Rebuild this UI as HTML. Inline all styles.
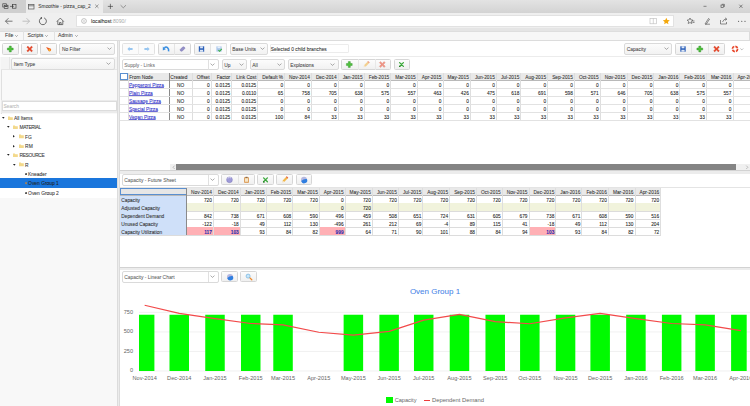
<!DOCTYPE html><html><head><meta charset="utf-8"><style>
html,body{margin:0;padding:0;width:750px;height:406px;overflow:hidden;background:#fff;font-family:"Liberation Sans", sans-serif;}
*{box-sizing:border-box} div{-webkit-text-stroke-width:0.07px}
</style></head><body><div style="position:relative;width:750px;height:406px;overflow:hidden">
<div style="position:absolute;left:0px;top:0px;width:750px;height:13px;background:linear-gradient(#e3e3e3,#d3d3d3)"></div>
<div style="position:absolute;left:0px;top:0px;width:26px;height:12.5px;background:#cfcfcf"></div>
<div style="position:absolute;left:26px;top:0px;width:77px;height:13px;background:#ececec"></div>
<svg style="position:absolute;left:0px;top:0px;pointer-events:none" width="750" height="406" viewBox="0 0 750 406"><rect x="2.8" y="3.8" width="3.6" height="3.2" fill="none" stroke="#333" stroke-width="0.6"/><rect x="4.2" y="5.2" width="3.8" height="3.4" fill="#d0d0d0" stroke="#333" stroke-width="0.6"/><rect x="4.6" y="5.8" width="3" height="1" fill="#333"/><rect x="12.4" y="4.6" width="3.6" height="3.6" fill="none" stroke="#333" stroke-width="0.6"/><path d="M10,6.4 h3.4 M12,5.2 l1.3,1.2 l-1.3,1.2" fill="none" stroke="#333" stroke-width="0.6"/><rect x="28.5" y="4.5" width="5.5" height="4.5" fill="none" stroke="#555" stroke-width="0.7"/><line x1="28.5" y1="5.8" x2="34" y2="5.8" stroke="#555" stroke-width="0.7"/><path d="M95.2,4.6 l3.3,3.3 M98.5,4.6 l-3.3,3.3" stroke="#555" stroke-width="0.55"/><path d="M107.8,6.4 h5.2 M110.4,3.8 v5.2" stroke="#333" stroke-width="0.6"/><path d="M120.6,5.2 l2.7,2.6 l2.7,-2.6" fill="none" stroke="#555" stroke-width="0.55"/><path d="M703.5,6.3 h3" stroke="#444" stroke-width="0.6"/><rect x="721" y="5" width="2.6" height="2.6" fill="none" stroke="#444" stroke-width="0.6"/><path d="M721.8,4.3 h2.6 v2.6" fill="none" stroke="#444" stroke-width="0.6"/><path d="M739.3,4.7 l3.2,3.2 M742.5,4.7 l-3.2,3.2" stroke="#333" stroke-width="0.55"/></svg>
<div style="position:absolute;left:38.3px;top:4.6px;font-size:4.9px;line-height:1;white-space:nowrap;color:#3c3c3c;-webkit-text-stroke-width:0.05px">Smoothie - pizza_cap_2</div>
<div style="position:absolute;left:0px;top:13px;width:750px;height:17px;background:#efefef"></div>
<div style="position:absolute;left:76px;top:14.5px;width:598px;height:12.5px;background:#fff;border:0.5px solid #e2e2e2"></div>
<svg style="position:absolute;left:0px;top:0px;pointer-events:none" width="750" height="406" viewBox="0 0 750 406"><path d="M5.5,21.2 h7 M5.5,21.2 l3,-3 M5.5,21.2 l3,3" fill="none" stroke="#444" stroke-width="0.7"/><path d="M22.5,21.2 h7 M29.5,21.2 l-3,-3 M29.5,21.2 l-3,3" fill="none" stroke="#aaa" stroke-width="0.7"/><path d="M44.1,17.9 A3.5,3.5 0 1 1 41.4,18.0" fill="none" stroke="#333" stroke-width="0.7"/><circle cx="41.3" cy="18.1" r="0.75" fill="#222"/><path d="M56.8,21.6 l3.5,-3.5 l3.5,3.5 M57.8,20.8 v3.8 h5 v-3.8 M59.5,24.6 v-2 h1.6 v2" fill="none" stroke="#333" stroke-width="0.65"/><circle cx="84" cy="21" r="2.4" fill="none" stroke="#888" stroke-width="0.5"/><path d="M84,20 v2.3" stroke="#888" stroke-width="0.5"/><rect x="650" y="18.3" width="6.5" height="5.5" fill="none" stroke="#bbb" stroke-width="0.6"/><line x1="653.3" y1="18.3" x2="653.3" y2="23.8" stroke="#bbb" stroke-width="0.6"/><path d="M666.3,17.8 l1.05,2.2 l2.4,0.3 l-1.8,1.6 l0.5,2.4 l-2.15,-1.2 l-2.15,1.2 l0.5,-2.4 l-1.8,-1.6 l2.4,-0.3 z" fill="#f4a80c"/><path d="M690,18 l0.9,1.9 l2,0.2 l-1.5,1.4 l0.4,2 l-1.8,-1 l-1.8,1 l0.4,-2 l-1.5,-1.4 l2,-0.2 z" fill="none" stroke="#444" stroke-width="0.6"/><path d="M692,21 h2.5 M692.5,22.5 h2" stroke="#444" stroke-width="0.6"/><path d="M705,24 l3.5,-5.5 l1,0.7 l-3.5,5.3 z M706,24.2 h4" fill="none" stroke="#444" stroke-width="0.6"/><path d="M720.5,20 v4 h6 v-2 M722.5,22 q1,-3 4,-3 M725,17.8 l1.8,1.4 l-1.6,1.3" fill="none" stroke="#444" stroke-width="0.6"/><circle cx="738.6" cy="21.2" r="0.55" fill="#333"/><circle cx="741.8" cy="21.2" r="0.55" fill="#333"/><circle cx="745" cy="21.2" r="0.55" fill="#333"/></svg>
<div style="position:absolute;left:91px;top:19.3px;font-size:5.2px;line-height:1;white-space:nowrap;color:#2a2a2a;-webkit-text-stroke-width:0.05px">localhost<span style="color:#aaa;-webkit-text-stroke-width:0">:8090/</span></div>
<div style="position:absolute;left:0px;top:28.2px;width:750px;height:2.6px;background:#e5e5e5"></div>
<div style="position:absolute;left:0px;top:30.6px;width:750px;height:10.4px;background:#f7f7f7;border-top:0.4px solid #dedede;border-bottom:0.6px solid #dcdcdc;border-right:0.6px solid #dcdcdc"></div>
<div style="position:absolute;left:22.5px;top:31px;width:0.6px;height:9px;background:#e2e2e2"></div>
<div style="position:absolute;left:53.5px;top:31px;width:0.6px;height:9px;background:#e2e2e2"></div>
<div style="position:absolute;left:5.0px;top:32.8px;font-size:5.2px;line-height:1;white-space:nowrap;color:#3a3a3a;-webkit-text-stroke-width:0.05px">File</div>
<div style="position:absolute;left:27.5px;top:32.8px;font-size:5.2px;line-height:1;white-space:nowrap;color:#3a3a3a;-webkit-text-stroke-width:0.05px">Scripts</div>
<div style="position:absolute;left:58px;top:32.8px;font-size:5.2px;line-height:1;white-space:nowrap;color:#3a3a3a;-webkit-text-stroke-width:0.05px">Admin</div>
<svg style="position:absolute;left:15.0px;top:35px;" width="3" height="2" viewBox="0 0 3 2"><path d="M0.3,0.3 L1.5,1.5 L2.7,0.3" fill="none" stroke="#555" stroke-width="0.55"/></svg>
<svg style="position:absolute;left:45.0px;top:35px;" width="3" height="2" viewBox="0 0 3 2"><path d="M0.3,0.3 L1.5,1.5 L2.7,0.3" fill="none" stroke="#555" stroke-width="0.55"/></svg>
<svg style="position:absolute;left:74.5px;top:35px;" width="3" height="2" viewBox="0 0 3 2"><path d="M0.3,0.3 L1.5,1.5 L2.7,0.3" fill="none" stroke="#555" stroke-width="0.55"/></svg>
<div style="position:absolute;left:0px;top:41px;width:117px;height:365px;background:#f8f8f8"></div>
<div style="position:absolute;left:0px;top:41px;width:117px;height:15.5px;background:#fff"></div>
<div style="position:absolute;left:2px;top:43px;width:17px;height:12px;box-sizing:border-box;border:0.6px solid #d6d6d6;border-radius:1.5px;background:linear-gradient(#fcfcfc,#f0f0f0);"></div>
<div style="position:absolute;left:21.3px;top:43px;width:17px;height:12px;box-sizing:border-box;border:0.6px solid #d6d6d6;border-radius:1.5px;background:linear-gradient(#fcfcfc,#f0f0f0);"></div>
<div style="position:absolute;left:40.3px;top:43px;width:17px;height:12px;box-sizing:border-box;border:0.6px solid #d6d6d6;border-radius:1.5px;background:linear-gradient(#fcfcfc,#f0f0f0);"></div>
<div style="position:absolute;left:59.2px;top:43.2px;width:56px;height:11.4px;box-sizing:border-box;border:0.6px solid #dadada;border-radius:2px;background:linear-gradient(#fcfcfc,#f2f2f2);"></div>
<div style="position:absolute;left:62.0px;top:48.150000000000006px;font-size:4.9px;line-height:1;white-space:nowrap;color:#3a3a3a;-webkit-text-stroke-width:0.04px">No Filter</div>
<svg style="position:absolute;left:106.7px;top:47.400000000000006px;" width="5" height="3" viewBox="0 0 5 3"><path d="M0.5,0.6 L2.5,2.4 L4.5,0.6" fill="none" stroke="#777" stroke-width="0.6"/></svg>
<div style="position:absolute;left:1px;top:56.5px;width:116px;height:57px;background:#f9f9f9;border-left:0.6px solid #e0e0e0"></div>
<div style="position:absolute;left:1px;top:57px;width:116px;height:13px;background:#f4f4f4;border-bottom:0.6px solid #e6e6e6"></div>
<div style="position:absolute;left:9.3px;top:57px;width:0.6px;height:13px;background:#e6e6e6"></div>
<div style="position:absolute;left:11px;top:58px;width:103.8px;height:11.5px;box-sizing:border-box;border:0.6px solid #dadada;border-radius:2px;background:linear-gradient(#fcfcfc,#f2f2f2);"></div>
<div style="position:absolute;left:13.8px;top:63.0px;font-size:4.9px;line-height:1;white-space:nowrap;color:#3a3a3a;-webkit-text-stroke-width:0.04px">Item Type</div>
<svg style="position:absolute;left:106.3px;top:62.25px;" width="5" height="3" viewBox="0 0 5 3"><path d="M0.5,0.6 L2.5,2.4 L4.5,0.6" fill="none" stroke="#777" stroke-width="0.6"/></svg>
<div style="position:absolute;left:1px;top:99.5px;width:116px;height:13px;background:#ebebeb"></div>
<div style="position:absolute;left:1.5px;top:100.5px;width:115px;height:10.5px;background:#fff;border:0.6px solid #dcdcdc"></div>
<div style="position:absolute;left:3.5px;top:105.2px;font-size:4.9px;line-height:1;white-space:nowrap;color:#bbb;">Search</div>
<div style="position:absolute;left:0px;top:113.5px;width:117px;height:84px;background:#fff"></div>
<svg style="position:absolute;left:1.8px;top:116.9px;" width="3" height="2.5" viewBox="0 0 3 2.5"><path d="M0,0 h2.6 l-1.3,1.8 z" fill="#222"/></svg>
<svg style="position:absolute;left:7.6px;top:115.7px;" width="5" height="4.2" viewBox="0 0 5 4.2"><path d="M0,0.6 h1.8 l0.6,0.6 h2.4 v3 h-4.8 z" fill="#f3d98b"/></svg>
<div style="position:absolute;left:13.9px;top:116.80000000000001px;font-size:4.9px;line-height:1;white-space:nowrap;color:#333;">All Items</div>
<svg style="position:absolute;left:7.3999999999999995px;top:126.25px;" width="3" height="2.5" viewBox="0 0 3 2.5"><path d="M0,0 h2.6 l-1.3,1.8 z" fill="#222"/></svg>
<svg style="position:absolute;left:13.2px;top:125.05px;" width="5" height="4.2" viewBox="0 0 5 4.2"><path d="M0,0.6 h1.8 l0.6,0.6 h2.4 v3 h-4.8 z" fill="#f3d98b"/></svg>
<div style="position:absolute;left:19.5px;top:126.15px;font-size:4.9px;line-height:1;white-space:nowrap;color:#333;letter-spacing:-0.35px">MATERIAL</div>
<svg style="position:absolute;left:13.399999999999999px;top:135.29999999999998px;" width="2.5" height="3" viewBox="0 0 2.5 3"><path d="M0,0 v2.6 l1.8,-1.3 z" fill="#222"/></svg>
<svg style="position:absolute;left:18.799999999999997px;top:134.4px;" width="5" height="4.2" viewBox="0 0 5 4.2"><path d="M0,0.6 h1.8 l0.6,0.6 h2.4 v3 h-4.8 z" fill="#f3d98b"/></svg>
<div style="position:absolute;left:25.1px;top:135.5px;font-size:4.9px;line-height:1;white-space:nowrap;color:#333;">FG</div>
<svg style="position:absolute;left:13.399999999999999px;top:144.64999999999998px;" width="2.5" height="3" viewBox="0 0 2.5 3"><path d="M0,0 v2.6 l1.8,-1.3 z" fill="#222"/></svg>
<svg style="position:absolute;left:18.799999999999997px;top:143.75px;" width="5" height="4.2" viewBox="0 0 5 4.2"><path d="M0,0.6 h1.8 l0.6,0.6 h2.4 v3 h-4.8 z" fill="#f3d98b"/></svg>
<div style="position:absolute;left:25.1px;top:144.85px;font-size:4.9px;line-height:1;white-space:nowrap;color:#333;">RM</div>
<svg style="position:absolute;left:7.3999999999999995px;top:154.3px;" width="3" height="2.5" viewBox="0 0 3 2.5"><path d="M0,0 h2.6 l-1.3,1.8 z" fill="#222"/></svg>
<svg style="position:absolute;left:13.2px;top:153.10000000000002px;" width="5" height="4.2" viewBox="0 0 5 4.2"><path d="M0,0.6 h1.8 l0.6,0.6 h2.4 v3 h-4.8 z" fill="#f3d98b"/></svg>
<div style="position:absolute;left:19.5px;top:154.20000000000002px;font-size:4.9px;line-height:1;white-space:nowrap;color:#333;letter-spacing:-0.35px">RESOURCE</div>
<svg style="position:absolute;left:13.0px;top:163.65px;" width="3" height="2.5" viewBox="0 0 3 2.5"><path d="M0,0 h2.6 l-1.3,1.8 z" fill="#222"/></svg>
<svg style="position:absolute;left:18.799999999999997px;top:162.45000000000002px;" width="5" height="4.2" viewBox="0 0 5 4.2"><path d="M0,0.6 h1.8 l0.6,0.6 h2.4 v3 h-4.8 z" fill="#f3d98b"/></svg>
<div style="position:absolute;left:25.1px;top:163.55px;font-size:4.9px;line-height:1;white-space:nowrap;color:#333;">R</div>
<svg style="position:absolute;left:25.199999999999996px;top:172.9px;" width="2.3" height="2.3" viewBox="0 0 2.3 2.3"><circle cx="1.15" cy="1.15" r="1.15" fill="#555"/></svg>
<div style="position:absolute;left:28.099999999999998px;top:172.9px;font-size:4.9px;line-height:1;white-space:nowrap;color:#333;">Kneader</div>
<div style="position:absolute;left:0px;top:178.35000000000002px;width:117px;height:10px;background:#1a76dc"></div>
<svg style="position:absolute;left:25.199999999999996px;top:182.25000000000003px;" width="2.3" height="2.3" viewBox="0 0 2.3 2.3"><circle cx="1.15" cy="1.15" r="1.15" fill="#a08060"/></svg>
<div style="position:absolute;left:28.099999999999998px;top:182.25000000000003px;font-size:4.9px;line-height:1;white-space:nowrap;color:#222;">Oven Group 1</div>
<svg style="position:absolute;left:25.199999999999996px;top:191.6px;" width="2.3" height="2.3" viewBox="0 0 2.3 2.3"><circle cx="1.15" cy="1.15" r="1.15" fill="#555"/></svg>
<div style="position:absolute;left:28.099999999999998px;top:191.6px;font-size:4.9px;line-height:1;white-space:nowrap;color:#333;">Oven Group 2</div>
<div style="position:absolute;left:117px;top:41px;width:3px;height:365px;background:#ececec"></div>
<div style="position:absolute;left:117px;top:41px;width:0.6px;height:365px;background:#dcdcdc"></div>
<div style="position:absolute;left:119.4px;top:41px;width:0.6px;height:365px;background:#dcdcdc"></div>
<div style="position:absolute;left:120px;top:41px;width:630px;height:130px;background:#fff"></div>
<div style="position:absolute;left:120px;top:56.3px;width:630px;height:0.6px;background:#ececec"></div>
<div style="position:absolute;left:121.5px;top:43px;width:33.5px;height:11.8px;box-sizing:border-box;border:0.6px solid #d6d6d6;border-radius:1.5px;background:linear-gradient(#fcfcfc,#f0f0f0);background:#fbfbfb;border-color:#e2e2e2"></div>
<div style="position:absolute;left:138.3px;top:43.5px;width:0.6px;height:11px;background:#ececec"></div>
<div style="position:absolute;left:157.5px;top:43px;width:33.5px;height:11.8px;box-sizing:border-box;border:0.6px solid #d6d6d6;border-radius:1.5px;background:linear-gradient(#fcfcfc,#f0f0f0);"></div>
<div style="position:absolute;left:174.3px;top:43.5px;width:0.6px;height:11px;background:#e4e4e4"></div>
<div style="position:absolute;left:193.5px;top:43px;width:33.5px;height:11.8px;box-sizing:border-box;border:0.6px solid #d6d6d6;border-radius:1.5px;background:linear-gradient(#fcfcfc,#f0f0f0);"></div>
<div style="position:absolute;left:210.3px;top:43px;width:16.8px;height:11.8px;background:#fbfbfb;border-radius:0 1.5px 1.5px 0;border:0.6px solid #e2e2e2;border-left:0.6px solid #e4e4e4"></div>
<div style="position:absolute;left:229.5px;top:43.2px;width:38.5px;height:11.4px;box-sizing:border-box;border:0.6px solid #dadada;border-radius:2px;background:linear-gradient(#fcfcfc,#f2f2f2);"></div>
<div style="position:absolute;left:232.3px;top:48.150000000000006px;font-size:4.9px;line-height:1;white-space:nowrap;color:#3a3a3a;-webkit-text-stroke-width:0.04px">Base Units</div>
<svg style="position:absolute;left:259.5px;top:47.400000000000006px;" width="5" height="3" viewBox="0 0 5 3"><path d="M0.5,0.6 L2.5,2.4 L4.5,0.6" fill="none" stroke="#777" stroke-width="0.6"/></svg>
<div style="position:absolute;left:269.5px;top:44.3px;width:79px;height:8.8px;border:0.5px solid #ececec;border-radius:1px"></div>
<div style="position:absolute;left:270.8px;top:48.3px;font-size:4.9px;line-height:1;white-space:nowrap;color:#333;">Selected 0 child branches</div>
<div style="position:absolute;left:624px;top:43.2px;width:48px;height:11.4px;box-sizing:border-box;border:0.6px solid #dadada;border-radius:2px;background:linear-gradient(#fcfcfc,#f2f2f2);"></div>
<div style="position:absolute;left:626.8px;top:48.150000000000006px;font-size:4.9px;line-height:1;white-space:nowrap;color:#3a3a3a;-webkit-text-stroke-width:0.04px">Capacity</div>
<svg style="position:absolute;left:663.5px;top:47.400000000000006px;" width="5" height="3" viewBox="0 0 5 3"><path d="M0.5,0.6 L2.5,2.4 L4.5,0.6" fill="none" stroke="#777" stroke-width="0.6"/></svg>
<div style="position:absolute;left:674.5px;top:43px;width:50px;height:11.8px;box-sizing:border-box;border:0.6px solid #d6d6d6;border-radius:1.5px;background:linear-gradient(#fcfcfc,#f0f0f0);"></div>
<div style="position:absolute;left:691.3px;top:43.5px;width:0.6px;height:11px;background:#e4e4e4"></div>
<div style="position:absolute;left:708.3px;top:43.5px;width:0.6px;height:11px;background:#e4e4e4"></div>
<svg style="position:absolute;left:739.5px;top:48px;" width="4" height="3" viewBox="0 0 4 3"><path d="M0.4,0.5 L1.8,1.9 L3.2,0.5" fill="none" stroke="#777" stroke-width="0.5"/></svg>
<div style="position:absolute;left:121.5px;top:59px;width:97px;height:11px;box-sizing:border-box;border:0.6px solid #dadada;border-radius:2px;background:#fff;"></div>
<div style="position:absolute;left:124.3px;top:63.75px;font-size:4.9px;line-height:1;white-space:nowrap;color:#707070;-webkit-text-stroke-width:0.04px">Supply - Links</div>
<div style="position:absolute;left:207.5px;top:59.5px;width:0.6px;height:10px;background:#e0e0e0"></div>
<svg style="position:absolute;left:210.0px;top:63.0px;" width="5" height="3" viewBox="0 0 5 3"><path d="M0.5,0.6 L2.5,2.4 L4.5,0.6" fill="none" stroke="#777" stroke-width="0.6"/></svg>
<div style="position:absolute;left:221.5px;top:59px;width:25.5px;height:11px;box-sizing:border-box;border:0.6px solid #dadada;border-radius:2px;background:linear-gradient(#fcfcfc,#f2f2f2);"></div>
<div style="position:absolute;left:224.3px;top:63.75px;font-size:4.9px;line-height:1;white-space:nowrap;color:#3a3a3a;-webkit-text-stroke-width:0.04px">Up</div>
<svg style="position:absolute;left:238.5px;top:63.0px;" width="5" height="3" viewBox="0 0 5 3"><path d="M0.5,0.6 L2.5,2.4 L4.5,0.6" fill="none" stroke="#777" stroke-width="0.6"/></svg>
<div style="position:absolute;left:249.5px;top:59px;width:35.5px;height:11px;box-sizing:border-box;border:0.6px solid #dadada;border-radius:2px;background:linear-gradient(#fcfcfc,#f2f2f2);"></div>
<div style="position:absolute;left:252.3px;top:63.75px;font-size:4.9px;line-height:1;white-space:nowrap;color:#3a3a3a;-webkit-text-stroke-width:0.04px">All</div>
<svg style="position:absolute;left:276.5px;top:63.0px;" width="5" height="3" viewBox="0 0 5 3"><path d="M0.5,0.6 L2.5,2.4 L4.5,0.6" fill="none" stroke="#777" stroke-width="0.6"/></svg>
<div style="position:absolute;left:287.5px;top:59px;width:51px;height:11px;box-sizing:border-box;border:0.6px solid #dadada;border-radius:2px;background:linear-gradient(#fcfcfc,#f2f2f2);"></div>
<div style="position:absolute;left:290.3px;top:63.75px;font-size:4.9px;line-height:1;white-space:nowrap;color:#3a3a3a;-webkit-text-stroke-width:0.04px">Explosions</div>
<svg style="position:absolute;left:330.0px;top:63.0px;" width="5" height="3" viewBox="0 0 5 3"><path d="M0.5,0.6 L2.5,2.4 L4.5,0.6" fill="none" stroke="#777" stroke-width="0.6"/></svg>
<div style="position:absolute;left:340.5px;top:59px;width:50px;height:11px;box-sizing:border-box;border:0.6px solid #d6d6d6;border-radius:1.5px;background:linear-gradient(#fcfcfc,#f0f0f0);"></div>
<div style="position:absolute;left:357.8px;top:59px;width:0.6px;height:11px;background:#e8e8e8"></div>
<div style="position:absolute;left:374.5px;top:59px;width:0.6px;height:11px;background:#e8e8e8"></div>
<div style="position:absolute;left:393.5px;top:59px;width:16.3px;height:11px;box-sizing:border-box;border:0.6px solid #d6d6d6;border-radius:1.5px;background:linear-gradient(#fcfcfc,#f0f0f0);"></div>
<div style="position:absolute;left:120px;top:72.5px;width:630px;height:8.0px;background:#e9e9e9;border-bottom:0.8px solid #b9b9b9"></div>
<div style="position:absolute;left:127.89999999999999px;top:72.5px;width:0.6px;height:47.7px;background:#dedede"></div>
<div style="position:absolute;left:129.2px;top:75.8px;font-size:4.8px;line-height:1;white-space:nowrap;color:#333;">From Node</div>
<div style="position:absolute;left:168.85468749999998px;top:72.5px;width:0.6px;height:47.7px;background:#8a8a8a"></div>
<div style="position:absolute;left:170.35468749999998px;top:75.8px;font-size:4.8px;line-height:1;white-space:nowrap;color:#333;">Created</div>
<div style="position:absolute;left:191.93124999999998px;top:72.5px;width:0.6px;height:47.7px;background:#dedede"></div>
<div style="position:absolute;right:540.4515625px;top:75.8px;font-size:4.8px;line-height:1;white-space:nowrap;color:#333;text-align:right;">Offset</div>
<div style="position:absolute;left:210.64843749999997px;top:72.5px;width:0.6px;height:47.7px;background:#dedede"></div>
<div style="position:absolute;right:519.7703125px;top:75.8px;font-size:4.8px;line-height:1;white-space:nowrap;color:#333;text-align:right;">Factor</div>
<div style="position:absolute;left:231.32968749999998px;top:72.5px;width:0.6px;height:47.7px;background:#dedede"></div>
<div style="position:absolute;right:493.76171875px;top:75.8px;font-size:4.8px;line-height:1;white-space:nowrap;color:#333;text-align:right;">Link Cost</div>
<div style="position:absolute;left:257.33828124999997px;top:72.5px;width:0.6px;height:47.7px;background:#dedede"></div>
<div style="position:absolute;right:466.9515625px;top:75.8px;font-size:4.8px;line-height:1;white-space:nowrap;color:#333;text-align:right;">Default %</div>
<div style="position:absolute;left:284.14843749999994px;top:72.5px;width:0.6px;height:47.7px;background:#dedede"></div>
<div style="position:absolute;right:440.1390625px;top:75.8px;font-size:4.8px;line-height:1;white-space:nowrap;color:#333;text-align:right;">Nov-2014</div>
<div style="position:absolute;left:310.96093749999994px;top:72.5px;width:0.6px;height:47.7px;background:#dedede"></div>
<div style="position:absolute;right:413.3265625px;top:75.8px;font-size:4.8px;line-height:1;white-space:nowrap;color:#333;text-align:right;">Dec-2014</div>
<div style="position:absolute;left:337.77343749999994px;top:72.5px;width:0.6px;height:47.7px;background:#dedede"></div>
<div style="position:absolute;right:387.3109375px;top:75.8px;font-size:4.8px;line-height:1;white-space:nowrap;color:#333;text-align:right;">Jan-2015</div>
<div style="position:absolute;left:363.78906249999994px;top:72.5px;width:0.6px;height:47.7px;background:#dedede"></div>
<div style="position:absolute;right:360.76328125000003px;top:75.8px;font-size:4.8px;line-height:1;white-space:nowrap;color:#333;text-align:right;">Feb-2015</div>
<div style="position:absolute;left:390.33671874999993px;top:72.5px;width:0.6px;height:47.7px;background:#dedede"></div>
<div style="position:absolute;right:334.22031250000003px;top:75.8px;font-size:4.8px;line-height:1;white-space:nowrap;color:#333;text-align:right;">Mar-2015</div>
<div style="position:absolute;left:416.87968749999993px;top:72.5px;width:0.6px;height:47.7px;background:#dedede"></div>
<div style="position:absolute;right:308.47421875000003px;top:75.8px;font-size:4.8px;line-height:1;white-space:nowrap;color:#333;text-align:right;">Apr-2015</div>
<div style="position:absolute;left:442.62578124999993px;top:72.5px;width:0.6px;height:47.7px;background:#dedede"></div>
<div style="position:absolute;right:281.12968750000005px;top:75.8px;font-size:4.8px;line-height:1;white-space:nowrap;color:#333;text-align:right;">May-2015</div>
<div style="position:absolute;left:469.9703124999999px;top:72.5px;width:0.6px;height:47.7px;background:#dedede"></div>
<div style="position:absolute;right:255.11406250000005px;top:75.8px;font-size:4.8px;line-height:1;white-space:nowrap;color:#333;text-align:right;">Jun-2015</div>
<div style="position:absolute;left:495.9859374999999px;top:72.5px;width:0.6px;height:47.7px;background:#dedede"></div>
<div style="position:absolute;right:230.70156250000002px;top:75.8px;font-size:4.8px;line-height:1;white-space:nowrap;color:#333;text-align:right;">Jul-2015</div>
<div style="position:absolute;left:520.3984375px;top:72.5px;width:0.6px;height:47.7px;background:#dedede"></div>
<div style="position:absolute;right:203.88437499999998px;top:75.8px;font-size:4.8px;line-height:1;white-space:nowrap;color:#333;text-align:right;">Aug-2015</div>
<div style="position:absolute;left:547.215625px;top:72.5px;width:0.6px;height:47.7px;background:#dedede"></div>
<div style="position:absolute;right:177.06718749999993px;top:75.8px;font-size:4.8px;line-height:1;white-space:nowrap;color:#333;text-align:right;">Sep-2015</div>
<div style="position:absolute;left:574.0328125000001px;top:72.5px;width:0.6px;height:47.7px;background:#dedede"></div>
<div style="position:absolute;right:151.32343749999995px;top:75.8px;font-size:4.8px;line-height:1;white-space:nowrap;color:#333;text-align:right;">Oct-2015</div>
<div style="position:absolute;left:599.7765625000001px;top:72.5px;width:0.6px;height:47.7px;background:#dedede"></div>
<div style="position:absolute;right:124.51093749999995px;top:75.8px;font-size:4.8px;line-height:1;white-space:nowrap;color:#333;text-align:right;">Nov-2015</div>
<div style="position:absolute;left:626.5890625000001px;top:72.5px;width:0.6px;height:47.7px;background:#dedede"></div>
<div style="position:absolute;right:97.69843749999995px;top:75.8px;font-size:4.8px;line-height:1;white-space:nowrap;color:#333;text-align:right;">Dec-2015</div>
<div style="position:absolute;left:653.4015625000001px;top:72.5px;width:0.6px;height:47.7px;background:#dedede"></div>
<div style="position:absolute;right:71.68281249999995px;top:75.8px;font-size:4.8px;line-height:1;white-space:nowrap;color:#333;text-align:right;">Jan-2016</div>
<div style="position:absolute;left:679.4171875000001px;top:72.5px;width:0.6px;height:47.7px;background:#dedede"></div>
<div style="position:absolute;right:45.13515624999991px;top:75.8px;font-size:4.8px;line-height:1;white-space:nowrap;color:#333;text-align:right;">Feb-2016</div>
<div style="position:absolute;left:705.9648437500001px;top:72.5px;width:0.6px;height:47.7px;background:#dedede"></div>
<div style="position:absolute;right:18.59218749999991px;top:75.8px;font-size:4.8px;line-height:1;white-space:nowrap;color:#333;text-align:right;">Mar-2016</div>
<div style="position:absolute;left:732.5078125000001px;top:72.5px;width:0.6px;height:47.7px;background:#dedede"></div>
<div style="position:absolute;right:-7.153906250000091px;top:75.8px;font-size:4.8px;line-height:1;white-space:nowrap;color:#333;text-align:right;">Apr-2016</div>
<div style="position:absolute;left:120.3px;top:72.8px;width:8px;height:7.6px;border:0.8px solid #5a8fd0;background:#fff"></div>
<div style="position:absolute;left:120px;top:87.94px;width:630px;height:0.6px;background:#e2e2e2"></div>
<div style="position:absolute;left:129.0px;top:83.8px;font-size:4.8px;line-height:1;white-space:nowrap;color:#3434c8;text-decoration:underline;text-decoration-thickness:0.5px;text-underline-offset:0.3px;text-decoration-color:#6b6bd6">Pepperoni Pizza</div>
<div style="position:absolute;left:130.69296874999998px;width:100px;top:83.8px;font-size:4.8px;line-height:1;white-space:nowrap;color:#222;text-align:center;">NO</div>
<div style="position:absolute;right:540.4515625px;top:83.8px;font-size:4.8px;line-height:1;white-space:nowrap;color:#222;text-align:right;">0</div>
<div style="position:absolute;right:519.7703125px;top:83.8px;font-size:4.8px;line-height:1;white-space:nowrap;color:#222;text-align:right;">0.0125</div>
<div style="position:absolute;right:493.76171875px;top:83.8px;font-size:4.8px;line-height:1;white-space:nowrap;color:#222;text-align:right;">0.0125</div>
<div style="position:absolute;right:466.9515625px;top:83.8px;font-size:4.8px;line-height:1;white-space:nowrap;color:#222;text-align:right;">0</div>
<div style="position:absolute;right:440.1390625px;top:83.8px;font-size:4.8px;line-height:1;white-space:nowrap;color:#222;text-align:right;">0</div>
<div style="position:absolute;right:413.3265625px;top:83.8px;font-size:4.8px;line-height:1;white-space:nowrap;color:#222;text-align:right;">0</div>
<div style="position:absolute;right:387.3109375px;top:83.8px;font-size:4.8px;line-height:1;white-space:nowrap;color:#222;text-align:right;">0</div>
<div style="position:absolute;right:360.76328125000003px;top:83.8px;font-size:4.8px;line-height:1;white-space:nowrap;color:#222;text-align:right;">0</div>
<div style="position:absolute;right:334.22031250000003px;top:83.8px;font-size:4.8px;line-height:1;white-space:nowrap;color:#222;text-align:right;">0</div>
<div style="position:absolute;right:308.47421875000003px;top:83.8px;font-size:4.8px;line-height:1;white-space:nowrap;color:#222;text-align:right;">0</div>
<div style="position:absolute;right:281.12968750000005px;top:83.8px;font-size:4.8px;line-height:1;white-space:nowrap;color:#222;text-align:right;">0</div>
<div style="position:absolute;right:255.11406250000005px;top:83.8px;font-size:4.8px;line-height:1;white-space:nowrap;color:#222;text-align:right;">0</div>
<div style="position:absolute;right:230.70156250000002px;top:83.8px;font-size:4.8px;line-height:1;white-space:nowrap;color:#222;text-align:right;">0</div>
<div style="position:absolute;right:203.88437499999998px;top:83.8px;font-size:4.8px;line-height:1;white-space:nowrap;color:#222;text-align:right;">0</div>
<div style="position:absolute;right:177.06718749999993px;top:83.8px;font-size:4.8px;line-height:1;white-space:nowrap;color:#222;text-align:right;">0</div>
<div style="position:absolute;right:151.32343749999995px;top:83.8px;font-size:4.8px;line-height:1;white-space:nowrap;color:#222;text-align:right;">0</div>
<div style="position:absolute;right:124.51093749999995px;top:83.8px;font-size:4.8px;line-height:1;white-space:nowrap;color:#222;text-align:right;">0</div>
<div style="position:absolute;right:97.69843749999995px;top:83.8px;font-size:4.8px;line-height:1;white-space:nowrap;color:#222;text-align:right;">0</div>
<div style="position:absolute;right:71.68281249999995px;top:83.8px;font-size:4.8px;line-height:1;white-space:nowrap;color:#222;text-align:right;">0</div>
<div style="position:absolute;right:45.13515624999991px;top:83.8px;font-size:4.8px;line-height:1;white-space:nowrap;color:#222;text-align:right;">0</div>
<div style="position:absolute;right:18.59218749999991px;top:83.8px;font-size:4.8px;line-height:1;white-space:nowrap;color:#222;text-align:right;">0</div>
<div style="position:absolute;right:-7.153906250000091px;top:83.8px;font-size:4.8px;line-height:1;white-space:nowrap;color:#222;text-align:right;">0</div>
<div style="position:absolute;left:120px;top:95.88px;width:630px;height:0.6px;background:#e2e2e2"></div>
<div style="position:absolute;left:129.0px;top:91.74px;font-size:4.8px;line-height:1;white-space:nowrap;color:#3434c8;text-decoration:underline;text-decoration-thickness:0.5px;text-underline-offset:0.3px;text-decoration-color:#6b6bd6">Plain Pizza</div>
<div style="position:absolute;left:130.69296874999998px;width:100px;top:91.74px;font-size:4.8px;line-height:1;white-space:nowrap;color:#222;text-align:center;">NO</div>
<div style="position:absolute;right:540.4515625px;top:91.74px;font-size:4.8px;line-height:1;white-space:nowrap;color:#222;text-align:right;">0</div>
<div style="position:absolute;right:519.7703125px;top:91.74px;font-size:4.8px;line-height:1;white-space:nowrap;color:#222;text-align:right;">0.0125</div>
<div style="position:absolute;right:493.76171875px;top:91.74px;font-size:4.8px;line-height:1;white-space:nowrap;color:#222;text-align:right;">0.0110</div>
<div style="position:absolute;right:466.9515625px;top:91.74px;font-size:4.8px;line-height:1;white-space:nowrap;color:#222;text-align:right;">65</div>
<div style="position:absolute;right:440.1390625px;top:91.74px;font-size:4.8px;line-height:1;white-space:nowrap;color:#222;text-align:right;">758</div>
<div style="position:absolute;right:413.3265625px;top:91.74px;font-size:4.8px;line-height:1;white-space:nowrap;color:#222;text-align:right;">705</div>
<div style="position:absolute;right:387.3109375px;top:91.74px;font-size:4.8px;line-height:1;white-space:nowrap;color:#222;text-align:right;">638</div>
<div style="position:absolute;right:360.76328125000003px;top:91.74px;font-size:4.8px;line-height:1;white-space:nowrap;color:#222;text-align:right;">575</div>
<div style="position:absolute;right:334.22031250000003px;top:91.74px;font-size:4.8px;line-height:1;white-space:nowrap;color:#222;text-align:right;">557</div>
<div style="position:absolute;right:308.47421875000003px;top:91.74px;font-size:4.8px;line-height:1;white-space:nowrap;color:#222;text-align:right;">463</div>
<div style="position:absolute;right:281.12968750000005px;top:91.74px;font-size:4.8px;line-height:1;white-space:nowrap;color:#222;text-align:right;">426</div>
<div style="position:absolute;right:255.11406250000005px;top:91.74px;font-size:4.8px;line-height:1;white-space:nowrap;color:#222;text-align:right;">475</div>
<div style="position:absolute;right:230.70156250000002px;top:91.74px;font-size:4.8px;line-height:1;white-space:nowrap;color:#222;text-align:right;">618</div>
<div style="position:absolute;right:203.88437499999998px;top:91.74px;font-size:4.8px;line-height:1;white-space:nowrap;color:#222;text-align:right;">691</div>
<div style="position:absolute;right:177.06718749999993px;top:91.74px;font-size:4.8px;line-height:1;white-space:nowrap;color:#222;text-align:right;">598</div>
<div style="position:absolute;right:151.32343749999995px;top:91.74px;font-size:4.8px;line-height:1;white-space:nowrap;color:#222;text-align:right;">571</div>
<div style="position:absolute;right:124.51093749999995px;top:91.74px;font-size:4.8px;line-height:1;white-space:nowrap;color:#222;text-align:right;">646</div>
<div style="position:absolute;right:97.69843749999995px;top:91.74px;font-size:4.8px;line-height:1;white-space:nowrap;color:#222;text-align:right;">705</div>
<div style="position:absolute;right:71.68281249999995px;top:91.74px;font-size:4.8px;line-height:1;white-space:nowrap;color:#222;text-align:right;">638</div>
<div style="position:absolute;right:45.13515624999991px;top:91.74px;font-size:4.8px;line-height:1;white-space:nowrap;color:#222;text-align:right;">575</div>
<div style="position:absolute;right:18.59218749999991px;top:91.74px;font-size:4.8px;line-height:1;white-space:nowrap;color:#222;text-align:right;">557</div>
<div style="position:absolute;right:-7.153906250000091px;top:91.74px;font-size:4.8px;line-height:1;white-space:nowrap;color:#222;text-align:right;"></div>
<div style="position:absolute;left:120px;top:103.82px;width:630px;height:0.6px;background:#e2e2e2"></div>
<div style="position:absolute;left:129.0px;top:99.67999999999999px;font-size:4.8px;line-height:1;white-space:nowrap;color:#3434c8;text-decoration:underline;text-decoration-thickness:0.5px;text-underline-offset:0.3px;text-decoration-color:#6b6bd6">Sausage Pizza</div>
<div style="position:absolute;left:130.69296874999998px;width:100px;top:99.67999999999999px;font-size:4.8px;line-height:1;white-space:nowrap;color:#222;text-align:center;">NO</div>
<div style="position:absolute;right:540.4515625px;top:99.67999999999999px;font-size:4.8px;line-height:1;white-space:nowrap;color:#222;text-align:right;">0</div>
<div style="position:absolute;right:519.7703125px;top:99.67999999999999px;font-size:4.8px;line-height:1;white-space:nowrap;color:#222;text-align:right;">0.0125</div>
<div style="position:absolute;right:493.76171875px;top:99.67999999999999px;font-size:4.8px;line-height:1;white-space:nowrap;color:#222;text-align:right;">0.0125</div>
<div style="position:absolute;right:466.9515625px;top:99.67999999999999px;font-size:4.8px;line-height:1;white-space:nowrap;color:#222;text-align:right;">0</div>
<div style="position:absolute;right:440.1390625px;top:99.67999999999999px;font-size:4.8px;line-height:1;white-space:nowrap;color:#222;text-align:right;">0</div>
<div style="position:absolute;right:413.3265625px;top:99.67999999999999px;font-size:4.8px;line-height:1;white-space:nowrap;color:#222;text-align:right;">0</div>
<div style="position:absolute;right:387.3109375px;top:99.67999999999999px;font-size:4.8px;line-height:1;white-space:nowrap;color:#222;text-align:right;">0</div>
<div style="position:absolute;right:360.76328125000003px;top:99.67999999999999px;font-size:4.8px;line-height:1;white-space:nowrap;color:#222;text-align:right;">0</div>
<div style="position:absolute;right:334.22031250000003px;top:99.67999999999999px;font-size:4.8px;line-height:1;white-space:nowrap;color:#222;text-align:right;">0</div>
<div style="position:absolute;right:308.47421875000003px;top:99.67999999999999px;font-size:4.8px;line-height:1;white-space:nowrap;color:#222;text-align:right;">0</div>
<div style="position:absolute;right:281.12968750000005px;top:99.67999999999999px;font-size:4.8px;line-height:1;white-space:nowrap;color:#222;text-align:right;">0</div>
<div style="position:absolute;right:255.11406250000005px;top:99.67999999999999px;font-size:4.8px;line-height:1;white-space:nowrap;color:#222;text-align:right;">0</div>
<div style="position:absolute;right:230.70156250000002px;top:99.67999999999999px;font-size:4.8px;line-height:1;white-space:nowrap;color:#222;text-align:right;">0</div>
<div style="position:absolute;right:203.88437499999998px;top:99.67999999999999px;font-size:4.8px;line-height:1;white-space:nowrap;color:#222;text-align:right;">0</div>
<div style="position:absolute;right:177.06718749999993px;top:99.67999999999999px;font-size:4.8px;line-height:1;white-space:nowrap;color:#222;text-align:right;">0</div>
<div style="position:absolute;right:151.32343749999995px;top:99.67999999999999px;font-size:4.8px;line-height:1;white-space:nowrap;color:#222;text-align:right;">0</div>
<div style="position:absolute;right:124.51093749999995px;top:99.67999999999999px;font-size:4.8px;line-height:1;white-space:nowrap;color:#222;text-align:right;">0</div>
<div style="position:absolute;right:97.69843749999995px;top:99.67999999999999px;font-size:4.8px;line-height:1;white-space:nowrap;color:#222;text-align:right;">0</div>
<div style="position:absolute;right:71.68281249999995px;top:99.67999999999999px;font-size:4.8px;line-height:1;white-space:nowrap;color:#222;text-align:right;">0</div>
<div style="position:absolute;right:45.13515624999991px;top:99.67999999999999px;font-size:4.8px;line-height:1;white-space:nowrap;color:#222;text-align:right;">0</div>
<div style="position:absolute;right:18.59218749999991px;top:99.67999999999999px;font-size:4.8px;line-height:1;white-space:nowrap;color:#222;text-align:right;">0</div>
<div style="position:absolute;right:-7.153906250000091px;top:99.67999999999999px;font-size:4.8px;line-height:1;white-space:nowrap;color:#222;text-align:right;">0</div>
<div style="position:absolute;left:120px;top:111.75999999999999px;width:630px;height:0.6px;background:#e2e2e2"></div>
<div style="position:absolute;left:129.0px;top:107.61999999999999px;font-size:4.8px;line-height:1;white-space:nowrap;color:#3434c8;text-decoration:underline;text-decoration-thickness:0.5px;text-underline-offset:0.3px;text-decoration-color:#6b6bd6">Special Pizza</div>
<div style="position:absolute;left:130.69296874999998px;width:100px;top:107.61999999999999px;font-size:4.8px;line-height:1;white-space:nowrap;color:#222;text-align:center;">NO</div>
<div style="position:absolute;right:540.4515625px;top:107.61999999999999px;font-size:4.8px;line-height:1;white-space:nowrap;color:#222;text-align:right;">0</div>
<div style="position:absolute;right:519.7703125px;top:107.61999999999999px;font-size:4.8px;line-height:1;white-space:nowrap;color:#222;text-align:right;">0.0125</div>
<div style="position:absolute;right:493.76171875px;top:107.61999999999999px;font-size:4.8px;line-height:1;white-space:nowrap;color:#222;text-align:right;">0.0125</div>
<div style="position:absolute;right:466.9515625px;top:107.61999999999999px;font-size:4.8px;line-height:1;white-space:nowrap;color:#222;text-align:right;">0</div>
<div style="position:absolute;right:440.1390625px;top:107.61999999999999px;font-size:4.8px;line-height:1;white-space:nowrap;color:#222;text-align:right;">0</div>
<div style="position:absolute;right:413.3265625px;top:107.61999999999999px;font-size:4.8px;line-height:1;white-space:nowrap;color:#222;text-align:right;">0</div>
<div style="position:absolute;right:387.3109375px;top:107.61999999999999px;font-size:4.8px;line-height:1;white-space:nowrap;color:#222;text-align:right;">0</div>
<div style="position:absolute;right:360.76328125000003px;top:107.61999999999999px;font-size:4.8px;line-height:1;white-space:nowrap;color:#222;text-align:right;">0</div>
<div style="position:absolute;right:334.22031250000003px;top:107.61999999999999px;font-size:4.8px;line-height:1;white-space:nowrap;color:#222;text-align:right;">0</div>
<div style="position:absolute;right:308.47421875000003px;top:107.61999999999999px;font-size:4.8px;line-height:1;white-space:nowrap;color:#222;text-align:right;">0</div>
<div style="position:absolute;right:281.12968750000005px;top:107.61999999999999px;font-size:4.8px;line-height:1;white-space:nowrap;color:#222;text-align:right;">0</div>
<div style="position:absolute;right:255.11406250000005px;top:107.61999999999999px;font-size:4.8px;line-height:1;white-space:nowrap;color:#222;text-align:right;">0</div>
<div style="position:absolute;right:230.70156250000002px;top:107.61999999999999px;font-size:4.8px;line-height:1;white-space:nowrap;color:#222;text-align:right;">0</div>
<div style="position:absolute;right:203.88437499999998px;top:107.61999999999999px;font-size:4.8px;line-height:1;white-space:nowrap;color:#222;text-align:right;">0</div>
<div style="position:absolute;right:177.06718749999993px;top:107.61999999999999px;font-size:4.8px;line-height:1;white-space:nowrap;color:#222;text-align:right;">0</div>
<div style="position:absolute;right:151.32343749999995px;top:107.61999999999999px;font-size:4.8px;line-height:1;white-space:nowrap;color:#222;text-align:right;">0</div>
<div style="position:absolute;right:124.51093749999995px;top:107.61999999999999px;font-size:4.8px;line-height:1;white-space:nowrap;color:#222;text-align:right;">0</div>
<div style="position:absolute;right:97.69843749999995px;top:107.61999999999999px;font-size:4.8px;line-height:1;white-space:nowrap;color:#222;text-align:right;">0</div>
<div style="position:absolute;right:71.68281249999995px;top:107.61999999999999px;font-size:4.8px;line-height:1;white-space:nowrap;color:#222;text-align:right;">0</div>
<div style="position:absolute;right:45.13515624999991px;top:107.61999999999999px;font-size:4.8px;line-height:1;white-space:nowrap;color:#222;text-align:right;">0</div>
<div style="position:absolute;right:18.59218749999991px;top:107.61999999999999px;font-size:4.8px;line-height:1;white-space:nowrap;color:#222;text-align:right;">0</div>
<div style="position:absolute;right:-7.153906250000091px;top:107.61999999999999px;font-size:4.8px;line-height:1;white-space:nowrap;color:#222;text-align:right;">0</div>
<div style="position:absolute;left:120px;top:119.7px;width:630px;height:0.6px;background:#e2e2e2"></div>
<div style="position:absolute;left:129.0px;top:115.56px;font-size:4.8px;line-height:1;white-space:nowrap;color:#3434c8;text-decoration:underline;text-decoration-thickness:0.5px;text-underline-offset:0.3px;text-decoration-color:#6b6bd6">Vegan Pizza</div>
<div style="position:absolute;left:130.69296874999998px;width:100px;top:115.56px;font-size:4.8px;line-height:1;white-space:nowrap;color:#222;text-align:center;">NO</div>
<div style="position:absolute;right:540.4515625px;top:115.56px;font-size:4.8px;line-height:1;white-space:nowrap;color:#222;text-align:right;">0</div>
<div style="position:absolute;right:519.7703125px;top:115.56px;font-size:4.8px;line-height:1;white-space:nowrap;color:#222;text-align:right;">0.0125</div>
<div style="position:absolute;right:493.76171875px;top:115.56px;font-size:4.8px;line-height:1;white-space:nowrap;color:#222;text-align:right;">0.0125</div>
<div style="position:absolute;right:466.9515625px;top:115.56px;font-size:4.8px;line-height:1;white-space:nowrap;color:#222;text-align:right;">100</div>
<div style="position:absolute;right:440.1390625px;top:115.56px;font-size:4.8px;line-height:1;white-space:nowrap;color:#222;text-align:right;">84</div>
<div style="position:absolute;right:413.3265625px;top:115.56px;font-size:4.8px;line-height:1;white-space:nowrap;color:#222;text-align:right;">33</div>
<div style="position:absolute;right:387.3109375px;top:115.56px;font-size:4.8px;line-height:1;white-space:nowrap;color:#222;text-align:right;">33</div>
<div style="position:absolute;right:360.76328125000003px;top:115.56px;font-size:4.8px;line-height:1;white-space:nowrap;color:#222;text-align:right;">33</div>
<div style="position:absolute;right:334.22031250000003px;top:115.56px;font-size:4.8px;line-height:1;white-space:nowrap;color:#222;text-align:right;">33</div>
<div style="position:absolute;right:308.47421875000003px;top:115.56px;font-size:4.8px;line-height:1;white-space:nowrap;color:#222;text-align:right;">33</div>
<div style="position:absolute;right:281.12968750000005px;top:115.56px;font-size:4.8px;line-height:1;white-space:nowrap;color:#222;text-align:right;">33</div>
<div style="position:absolute;right:255.11406250000005px;top:115.56px;font-size:4.8px;line-height:1;white-space:nowrap;color:#222;text-align:right;">33</div>
<div style="position:absolute;right:230.70156250000002px;top:115.56px;font-size:4.8px;line-height:1;white-space:nowrap;color:#222;text-align:right;">33</div>
<div style="position:absolute;right:203.88437499999998px;top:115.56px;font-size:4.8px;line-height:1;white-space:nowrap;color:#222;text-align:right;">33</div>
<div style="position:absolute;right:177.06718749999993px;top:115.56px;font-size:4.8px;line-height:1;white-space:nowrap;color:#222;text-align:right;">33</div>
<div style="position:absolute;right:151.32343749999995px;top:115.56px;font-size:4.8px;line-height:1;white-space:nowrap;color:#222;text-align:right;">33</div>
<div style="position:absolute;right:124.51093749999995px;top:115.56px;font-size:4.8px;line-height:1;white-space:nowrap;color:#222;text-align:right;">33</div>
<div style="position:absolute;right:97.69843749999995px;top:115.56px;font-size:4.8px;line-height:1;white-space:nowrap;color:#222;text-align:right;">33</div>
<div style="position:absolute;right:71.68281249999995px;top:115.56px;font-size:4.8px;line-height:1;white-space:nowrap;color:#222;text-align:right;">33</div>
<div style="position:absolute;right:45.13515624999991px;top:115.56px;font-size:4.8px;line-height:1;white-space:nowrap;color:#222;text-align:right;">33</div>
<div style="position:absolute;right:18.59218749999991px;top:115.56px;font-size:4.8px;line-height:1;white-space:nowrap;color:#222;text-align:right;">33</div>
<div style="position:absolute;right:-7.153906250000091px;top:115.56px;font-size:4.8px;line-height:1;white-space:nowrap;color:#222;text-align:right;">33</div>
<div style="position:absolute;left:170px;top:164px;width:580px;height:6.5px;background:#f0f0f0"></div>
<div style="position:absolute;left:176px;top:164px;width:560px;height:6.2px;background:#848484"></div>
<svg style="position:absolute;left:171.5px;top:165px;" width="4" height="5" viewBox="0 0 4 5"><path d="M2.7,0.6 L1,2.3 L2.7,4" fill="none" stroke="#888" stroke-width="0.5"/></svg>
<svg style="position:absolute;left:745px;top:165px;" width="4" height="5" viewBox="0 0 4 5"><path d="M1.2,0.6 L2.9,2.3 L1.2,4" fill="none" stroke="#888" stroke-width="0.5"/></svg>
<div style="position:absolute;left:120px;top:170.4px;width:630px;height:0.8px;background:#d2d2d2"></div>
<div style="position:absolute;left:120px;top:171.2px;width:630px;height:2.4px;background:#ececec"></div>
<div style="position:absolute;left:120px;top:173.6px;width:630px;height:94px;background:#fff"></div>
<div style="position:absolute;left:121.5px;top:174px;width:97.1px;height:11.8px;box-sizing:border-box;border:0.6px solid #dadada;border-radius:2px;background:#fff;"></div>
<div style="position:absolute;left:124.3px;top:179.14999999999998px;font-size:4.9px;line-height:1;white-space:nowrap;color:#5a5a5a;-webkit-text-stroke-width:0.04px">Capacity - Future Sheet</div>
<div style="position:absolute;left:207.6px;top:174.5px;width:0.6px;height:10.8px;background:#e0e0e0"></div>
<svg style="position:absolute;left:210.1px;top:178.4px;" width="5" height="3" viewBox="0 0 5 3"><path d="M0.5,0.6 L2.5,2.4 L4.5,0.6" fill="none" stroke="#777" stroke-width="0.6"/></svg>
<div style="position:absolute;left:221.2px;top:174.2px;width:33.6px;height:11.2px;box-sizing:border-box;border:0.6px solid #d6d6d6;border-radius:1.5px;background:linear-gradient(#fcfcfc,#f0f0f0);"></div>
<div style="position:absolute;left:238px;top:174.6px;width:0.6px;height:10.5px;background:#e4e4e4"></div>
<div style="position:absolute;left:257.2px;top:174.2px;width:16.7px;height:11.2px;box-sizing:border-box;border:0.6px solid #d6d6d6;border-radius:1.5px;background:linear-gradient(#fcfcfc,#f0f0f0);"></div>
<div style="position:absolute;left:276.4px;top:174.2px;width:16.8px;height:11.2px;box-sizing:border-box;border:0.6px solid #d6d6d6;border-radius:1.5px;background:linear-gradient(#fcfcfc,#f0f0f0);"></div>
<div style="position:absolute;left:295.6px;top:174.2px;width:16.8px;height:11.2px;box-sizing:border-box;border:0.6px solid #d6d6d6;border-radius:1.5px;background:linear-gradient(#fcfcfc,#f0f0f0);"></div>
<div style="position:absolute;left:120px;top:187.0px;width:630px;height:0.6px;background:#e4e4e4"></div>
<div style="position:absolute;left:120px;top:187.5px;width:541px;height:8.0px;background:#e9e9e9;border-bottom:0.8px solid #b9b9b9"></div>
<div style="position:absolute;right:538.0875px;top:190.8px;font-size:4.8px;line-height:1;white-space:nowrap;color:#333;text-align:right;">Nov-2014</div>
<div style="position:absolute;right:511.275px;top:190.8px;font-size:4.8px;line-height:1;white-space:nowrap;color:#333;text-align:right;">Dec-2014</div>
<div style="position:absolute;right:485.259375px;top:190.8px;font-size:4.8px;line-height:1;white-space:nowrap;color:#333;text-align:right;">Jan-2015</div>
<div style="position:absolute;right:458.71171875px;top:190.8px;font-size:4.8px;line-height:1;white-space:nowrap;color:#333;text-align:right;">Feb-2015</div>
<div style="position:absolute;right:432.16875px;top:190.8px;font-size:4.8px;line-height:1;white-space:nowrap;color:#333;text-align:right;">Mar-2015</div>
<div style="position:absolute;right:406.42265625px;top:190.8px;font-size:4.8px;line-height:1;white-space:nowrap;color:#333;text-align:right;">Apr-2015</div>
<div style="position:absolute;right:379.078125px;top:190.8px;font-size:4.8px;line-height:1;white-space:nowrap;color:#333;text-align:right;">May-2015</div>
<div style="position:absolute;right:353.0625px;top:190.8px;font-size:4.8px;line-height:1;white-space:nowrap;color:#333;text-align:right;">Jun-2015</div>
<div style="position:absolute;right:328.65px;top:190.8px;font-size:4.8px;line-height:1;white-space:nowrap;color:#333;text-align:right;">Jul-2015</div>
<div style="position:absolute;right:301.8328125px;top:190.8px;font-size:4.8px;line-height:1;white-space:nowrap;color:#333;text-align:right;">Aug-2015</div>
<div style="position:absolute;right:275.015625px;top:190.8px;font-size:4.8px;line-height:1;white-space:nowrap;color:#333;text-align:right;">Sep-2015</div>
<div style="position:absolute;right:249.27187500000002px;top:190.8px;font-size:4.8px;line-height:1;white-space:nowrap;color:#333;text-align:right;">Oct-2015</div>
<div style="position:absolute;right:222.45937500000002px;top:190.8px;font-size:4.8px;line-height:1;white-space:nowrap;color:#333;text-align:right;">Nov-2015</div>
<div style="position:absolute;right:195.64687500000002px;top:190.8px;font-size:4.8px;line-height:1;white-space:nowrap;color:#333;text-align:right;">Dec-2015</div>
<div style="position:absolute;right:169.63125000000002px;top:190.8px;font-size:4.8px;line-height:1;white-space:nowrap;color:#333;text-align:right;">Jan-2016</div>
<div style="position:absolute;right:143.08359374999998px;top:190.8px;font-size:4.8px;line-height:1;white-space:nowrap;color:#333;text-align:right;">Feb-2016</div>
<div style="position:absolute;right:116.54062499999998px;top:190.8px;font-size:4.8px;line-height:1;white-space:nowrap;color:#333;text-align:right;">Mar-2016</div>
<div style="position:absolute;right:90.79453124999998px;top:190.8px;font-size:4.8px;line-height:1;white-space:nowrap;color:#333;text-align:right;">Apr-2016</div>
<div style="position:absolute;left:120.3px;top:187.7px;width:66.4px;height:7.8px;border:0.8px solid #5a8fd0;background:#e6e6e6"></div>
<div style="position:absolute;left:120px;top:195.5px;width:66.5px;height:7.94px;background:#cfe0f9"></div>
<div style="position:absolute;left:120px;top:202.94px;width:541px;height:0.6px;background:#dcdcdc"></div>
<div style="position:absolute;left:121.3px;top:198.8px;font-size:4.8px;line-height:1;white-space:nowrap;color:#333;">Capacity</div>
<div style="position:absolute;right:538.0875px;top:198.8px;font-size:4.8px;line-height:1;white-space:nowrap;color:#222;text-align:right;">720</div>
<div style="position:absolute;right:511.275px;top:198.8px;font-size:4.8px;line-height:1;white-space:nowrap;color:#222;text-align:right;">720</div>
<div style="position:absolute;right:485.259375px;top:198.8px;font-size:4.8px;line-height:1;white-space:nowrap;color:#222;text-align:right;">720</div>
<div style="position:absolute;right:458.71171875px;top:198.8px;font-size:4.8px;line-height:1;white-space:nowrap;color:#222;text-align:right;">720</div>
<div style="position:absolute;right:432.16875px;top:198.8px;font-size:4.8px;line-height:1;white-space:nowrap;color:#222;text-align:right;">720</div>
<div style="position:absolute;right:406.42265625px;top:198.8px;font-size:4.8px;line-height:1;white-space:nowrap;color:#222;text-align:right;">0</div>
<div style="position:absolute;right:379.078125px;top:198.8px;font-size:4.8px;line-height:1;white-space:nowrap;color:#222;text-align:right;">720</div>
<div style="position:absolute;right:353.0625px;top:198.8px;font-size:4.8px;line-height:1;white-space:nowrap;color:#222;text-align:right;">720</div>
<div style="position:absolute;right:328.65px;top:198.8px;font-size:4.8px;line-height:1;white-space:nowrap;color:#222;text-align:right;">720</div>
<div style="position:absolute;right:301.8328125px;top:198.8px;font-size:4.8px;line-height:1;white-space:nowrap;color:#222;text-align:right;">720</div>
<div style="position:absolute;right:275.015625px;top:198.8px;font-size:4.8px;line-height:1;white-space:nowrap;color:#222;text-align:right;">720</div>
<div style="position:absolute;right:249.27187500000002px;top:198.8px;font-size:4.8px;line-height:1;white-space:nowrap;color:#222;text-align:right;">720</div>
<div style="position:absolute;right:222.45937500000002px;top:198.8px;font-size:4.8px;line-height:1;white-space:nowrap;color:#222;text-align:right;">720</div>
<div style="position:absolute;right:195.64687500000002px;top:198.8px;font-size:4.8px;line-height:1;white-space:nowrap;color:#222;text-align:right;">720</div>
<div style="position:absolute;right:169.63125000000002px;top:198.8px;font-size:4.8px;line-height:1;white-space:nowrap;color:#222;text-align:right;">720</div>
<div style="position:absolute;right:143.08359374999998px;top:198.8px;font-size:4.8px;line-height:1;white-space:nowrap;color:#222;text-align:right;">720</div>
<div style="position:absolute;right:116.54062499999998px;top:198.8px;font-size:4.8px;line-height:1;white-space:nowrap;color:#222;text-align:right;">720</div>
<div style="position:absolute;right:90.79453124999998px;top:198.8px;font-size:4.8px;line-height:1;white-space:nowrap;color:#222;text-align:right;">720</div>
<div style="position:absolute;left:120px;top:203.44px;width:66.5px;height:7.94px;background:#cfe0f9"></div>
<div style="position:absolute;left:186.5px;top:203.44px;width:474.5px;height:7.94px;background:#f1f3dc"></div>
<div style="position:absolute;left:120px;top:210.88px;width:541px;height:0.6px;background:#dcdcdc"></div>
<div style="position:absolute;left:121.3px;top:206.74px;font-size:4.8px;line-height:1;white-space:nowrap;color:#333;">Adjusted Capacity</div>
<div style="position:absolute;right:406.42265625px;top:206.74px;font-size:4.8px;line-height:1;white-space:nowrap;color:#222;text-align:right;">0</div>
<div style="position:absolute;right:379.078125px;top:206.74px;font-size:4.8px;line-height:1;white-space:nowrap;color:#222;text-align:right;">720</div>
<div style="position:absolute;left:120px;top:211.38px;width:66.5px;height:7.94px;background:#cfe0f9"></div>
<div style="position:absolute;left:120px;top:218.82px;width:541px;height:0.6px;background:#dcdcdc"></div>
<div style="position:absolute;left:121.3px;top:214.68px;font-size:4.8px;line-height:1;white-space:nowrap;color:#333;">Dependent Demand</div>
<div style="position:absolute;right:538.0875px;top:214.68px;font-size:4.8px;line-height:1;white-space:nowrap;color:#222;text-align:right;">842</div>
<div style="position:absolute;right:511.275px;top:214.68px;font-size:4.8px;line-height:1;white-space:nowrap;color:#222;text-align:right;">738</div>
<div style="position:absolute;right:485.259375px;top:214.68px;font-size:4.8px;line-height:1;white-space:nowrap;color:#222;text-align:right;">671</div>
<div style="position:absolute;right:458.71171875px;top:214.68px;font-size:4.8px;line-height:1;white-space:nowrap;color:#222;text-align:right;">608</div>
<div style="position:absolute;right:432.16875px;top:214.68px;font-size:4.8px;line-height:1;white-space:nowrap;color:#222;text-align:right;">590</div>
<div style="position:absolute;right:406.42265625px;top:214.68px;font-size:4.8px;line-height:1;white-space:nowrap;color:#222;text-align:right;">496</div>
<div style="position:absolute;right:379.078125px;top:214.68px;font-size:4.8px;line-height:1;white-space:nowrap;color:#222;text-align:right;">459</div>
<div style="position:absolute;right:353.0625px;top:214.68px;font-size:4.8px;line-height:1;white-space:nowrap;color:#222;text-align:right;">508</div>
<div style="position:absolute;right:328.65px;top:214.68px;font-size:4.8px;line-height:1;white-space:nowrap;color:#222;text-align:right;">651</div>
<div style="position:absolute;right:301.8328125px;top:214.68px;font-size:4.8px;line-height:1;white-space:nowrap;color:#222;text-align:right;">724</div>
<div style="position:absolute;right:275.015625px;top:214.68px;font-size:4.8px;line-height:1;white-space:nowrap;color:#222;text-align:right;">631</div>
<div style="position:absolute;right:249.27187500000002px;top:214.68px;font-size:4.8px;line-height:1;white-space:nowrap;color:#222;text-align:right;">605</div>
<div style="position:absolute;right:222.45937500000002px;top:214.68px;font-size:4.8px;line-height:1;white-space:nowrap;color:#222;text-align:right;">679</div>
<div style="position:absolute;right:195.64687500000002px;top:214.68px;font-size:4.8px;line-height:1;white-space:nowrap;color:#222;text-align:right;">738</div>
<div style="position:absolute;right:169.63125000000002px;top:214.68px;font-size:4.8px;line-height:1;white-space:nowrap;color:#222;text-align:right;">671</div>
<div style="position:absolute;right:143.08359374999998px;top:214.68px;font-size:4.8px;line-height:1;white-space:nowrap;color:#222;text-align:right;">608</div>
<div style="position:absolute;right:116.54062499999998px;top:214.68px;font-size:4.8px;line-height:1;white-space:nowrap;color:#222;text-align:right;">590</div>
<div style="position:absolute;right:90.79453124999998px;top:214.68px;font-size:4.8px;line-height:1;white-space:nowrap;color:#222;text-align:right;">516</div>
<div style="position:absolute;left:120px;top:219.32px;width:66.5px;height:7.94px;background:#cfe0f9"></div>
<div style="position:absolute;left:120px;top:226.76px;width:541px;height:0.6px;background:#dcdcdc"></div>
<div style="position:absolute;left:121.3px;top:222.62px;font-size:4.8px;line-height:1;white-space:nowrap;color:#333;">Unused Capacity</div>
<div style="position:absolute;right:538.0875px;top:222.62px;font-size:4.8px;line-height:1;white-space:nowrap;color:#222;text-align:right;">-122</div>
<div style="position:absolute;right:511.275px;top:222.62px;font-size:4.8px;line-height:1;white-space:nowrap;color:#222;text-align:right;">-18</div>
<div style="position:absolute;right:485.259375px;top:222.62px;font-size:4.8px;line-height:1;white-space:nowrap;color:#222;text-align:right;">49</div>
<div style="position:absolute;right:458.71171875px;top:222.62px;font-size:4.8px;line-height:1;white-space:nowrap;color:#222;text-align:right;">112</div>
<div style="position:absolute;right:432.16875px;top:222.62px;font-size:4.8px;line-height:1;white-space:nowrap;color:#222;text-align:right;">130</div>
<div style="position:absolute;right:406.42265625px;top:222.62px;font-size:4.8px;line-height:1;white-space:nowrap;color:#222;text-align:right;">-496</div>
<div style="position:absolute;right:379.078125px;top:222.62px;font-size:4.8px;line-height:1;white-space:nowrap;color:#222;text-align:right;">261</div>
<div style="position:absolute;right:353.0625px;top:222.62px;font-size:4.8px;line-height:1;white-space:nowrap;color:#222;text-align:right;">212</div>
<div style="position:absolute;right:328.65px;top:222.62px;font-size:4.8px;line-height:1;white-space:nowrap;color:#222;text-align:right;">69</div>
<div style="position:absolute;right:301.8328125px;top:222.62px;font-size:4.8px;line-height:1;white-space:nowrap;color:#222;text-align:right;">-4</div>
<div style="position:absolute;right:275.015625px;top:222.62px;font-size:4.8px;line-height:1;white-space:nowrap;color:#222;text-align:right;">89</div>
<div style="position:absolute;right:249.27187500000002px;top:222.62px;font-size:4.8px;line-height:1;white-space:nowrap;color:#222;text-align:right;">115</div>
<div style="position:absolute;right:222.45937500000002px;top:222.62px;font-size:4.8px;line-height:1;white-space:nowrap;color:#222;text-align:right;">41</div>
<div style="position:absolute;right:195.64687500000002px;top:222.62px;font-size:4.8px;line-height:1;white-space:nowrap;color:#222;text-align:right;">-18</div>
<div style="position:absolute;right:169.63125000000002px;top:222.62px;font-size:4.8px;line-height:1;white-space:nowrap;color:#222;text-align:right;">49</div>
<div style="position:absolute;right:143.08359374999998px;top:222.62px;font-size:4.8px;line-height:1;white-space:nowrap;color:#222;text-align:right;">112</div>
<div style="position:absolute;right:116.54062499999998px;top:222.62px;font-size:4.8px;line-height:1;white-space:nowrap;color:#222;text-align:right;">130</div>
<div style="position:absolute;right:90.79453124999998px;top:222.62px;font-size:4.8px;line-height:1;white-space:nowrap;color:#222;text-align:right;">204</div>
<div style="position:absolute;left:120px;top:227.26px;width:66.5px;height:7.94px;background:#cfe0f9"></div>
<div style="position:absolute;left:120px;top:234.7px;width:541px;height:0.6px;background:#dcdcdc"></div>
<div style="position:absolute;left:121.3px;top:230.56px;font-size:4.8px;line-height:1;white-space:nowrap;color:#333;">Capacity Utilization</div>
<div style="position:absolute;left:186.5px;top:227.26px;width:26.8125px;height:7.54px;background:#ffb0b5"></div>
<div style="position:absolute;right:538.0875px;top:230.56px;font-size:4.8px;line-height:1;white-space:nowrap;color:#2a2ab0;text-align:right;font-weight:bold">117</div>
<div style="position:absolute;left:213.3125px;top:227.26px;width:26.8125px;height:7.54px;background:#ffb0b5"></div>
<div style="position:absolute;right:511.275px;top:230.56px;font-size:4.8px;line-height:1;white-space:nowrap;color:#2a2ab0;text-align:right;font-weight:bold">103</div>
<div style="position:absolute;right:485.259375px;top:230.56px;font-size:4.8px;line-height:1;white-space:nowrap;color:#222;text-align:right;">93</div>
<div style="position:absolute;right:458.71171875px;top:230.56px;font-size:4.8px;line-height:1;white-space:nowrap;color:#222;text-align:right;">84</div>
<div style="position:absolute;right:432.16875px;top:230.56px;font-size:4.8px;line-height:1;white-space:nowrap;color:#222;text-align:right;">82</div>
<div style="position:absolute;left:319.23125px;top:227.26px;width:25.74609375px;height:7.54px;background:#ffb0b5"></div>
<div style="position:absolute;right:406.42265625px;top:230.56px;font-size:4.8px;line-height:1;white-space:nowrap;color:#2a2ab0;text-align:right;font-weight:bold">999</div>
<div style="position:absolute;right:379.078125px;top:230.56px;font-size:4.8px;line-height:1;white-space:nowrap;color:#222;text-align:right;">64</div>
<div style="position:absolute;right:353.0625px;top:230.56px;font-size:4.8px;line-height:1;white-space:nowrap;color:#222;text-align:right;">71</div>
<div style="position:absolute;right:328.65px;top:230.56px;font-size:4.8px;line-height:1;white-space:nowrap;color:#222;text-align:right;">90</div>
<div style="position:absolute;right:301.8328125px;top:230.56px;font-size:4.8px;line-height:1;white-space:nowrap;color:#222;text-align:right;">101</div>
<div style="position:absolute;right:275.015625px;top:230.56px;font-size:4.8px;line-height:1;white-space:nowrap;color:#222;text-align:right;">88</div>
<div style="position:absolute;right:249.27187500000002px;top:230.56px;font-size:4.8px;line-height:1;white-space:nowrap;color:#222;text-align:right;">84</div>
<div style="position:absolute;right:222.45937500000002px;top:230.56px;font-size:4.8px;line-height:1;white-space:nowrap;color:#222;text-align:right;">94</div>
<div style="position:absolute;left:528.940625px;top:227.26px;width:26.8125px;height:7.54px;background:#ffb0b5"></div>
<div style="position:absolute;right:195.64687500000002px;top:230.56px;font-size:4.8px;line-height:1;white-space:nowrap;color:#2a2ab0;text-align:right;font-weight:bold">103</div>
<div style="position:absolute;right:169.63125000000002px;top:230.56px;font-size:4.8px;line-height:1;white-space:nowrap;color:#222;text-align:right;">93</div>
<div style="position:absolute;right:143.08359374999998px;top:230.56px;font-size:4.8px;line-height:1;white-space:nowrap;color:#222;text-align:right;">84</div>
<div style="position:absolute;right:116.54062499999998px;top:230.56px;font-size:4.8px;line-height:1;white-space:nowrap;color:#222;text-align:right;">82</div>
<div style="position:absolute;right:90.79453124999998px;top:230.56px;font-size:4.8px;line-height:1;white-space:nowrap;color:#222;text-align:right;">72</div>
<div style="position:absolute;left:186.2px;top:187.5px;width:0.6px;height:47.7px;background:#dedede"></div>
<div style="position:absolute;left:213.0125px;top:187.5px;width:0.6px;height:47.7px;background:#dedede"></div>
<div style="position:absolute;left:239.825px;top:187.5px;width:0.6px;height:47.7px;background:#dedede"></div>
<div style="position:absolute;left:265.840625px;top:187.5px;width:0.6px;height:47.7px;background:#dedede"></div>
<div style="position:absolute;left:292.38828125px;top:187.5px;width:0.6px;height:47.7px;background:#dedede"></div>
<div style="position:absolute;left:318.93125px;top:187.5px;width:0.6px;height:47.7px;background:#dedede"></div>
<div style="position:absolute;left:344.67734375px;top:187.5px;width:0.6px;height:47.7px;background:#dedede"></div>
<div style="position:absolute;left:372.02187499999997px;top:187.5px;width:0.6px;height:47.7px;background:#dedede"></div>
<div style="position:absolute;left:398.03749999999997px;top:187.5px;width:0.6px;height:47.7px;background:#dedede"></div>
<div style="position:absolute;left:422.45px;top:187.5px;width:0.6px;height:47.7px;background:#dedede"></div>
<div style="position:absolute;left:449.2671875px;top:187.5px;width:0.6px;height:47.7px;background:#dedede"></div>
<div style="position:absolute;left:476.08437499999997px;top:187.5px;width:0.6px;height:47.7px;background:#dedede"></div>
<div style="position:absolute;left:501.82812499999994px;top:187.5px;width:0.6px;height:47.7px;background:#dedede"></div>
<div style="position:absolute;left:528.640625px;top:187.5px;width:0.6px;height:47.7px;background:#dedede"></div>
<div style="position:absolute;left:555.453125px;top:187.5px;width:0.6px;height:47.7px;background:#dedede"></div>
<div style="position:absolute;left:581.46875px;top:187.5px;width:0.6px;height:47.7px;background:#dedede"></div>
<div style="position:absolute;left:608.01640625px;top:187.5px;width:0.6px;height:47.7px;background:#dedede"></div>
<div style="position:absolute;left:634.559375px;top:187.5px;width:0.6px;height:47.7px;background:#dedede"></div>
<div style="position:absolute;left:660.30546875px;top:187.5px;width:0.6px;height:47.7px;background:#dedede"></div>
<div style="position:absolute;left:186.2px;top:187.5px;width:0.6px;height:47.7px;background:#8a8a8a"></div>
<div style="position:absolute;left:120px;top:267.3px;width:630px;height:0.8px;background:#d2d2d2"></div>
<div style="position:absolute;left:120px;top:268.1px;width:630px;height:2.4px;background:#ececec"></div>
<div style="position:absolute;left:120px;top:270.5px;width:630px;height:136px;background:#fff"></div>
<div style="position:absolute;left:121.5px;top:271px;width:97.3px;height:11.8px;box-sizing:border-box;border:0.6px solid #dadada;border-radius:2px;background:#fff;"></div>
<div style="position:absolute;left:124.3px;top:276.15px;font-size:4.9px;line-height:1;white-space:nowrap;color:#5a5a5a;-webkit-text-stroke-width:0.04px">Capacity - Linear Chart</div>
<div style="position:absolute;left:207.8px;top:271.5px;width:0.6px;height:10.8px;background:#e0e0e0"></div>
<svg style="position:absolute;left:210.3px;top:275.4px;" width="5" height="3" viewBox="0 0 5 3"><path d="M0.5,0.6 L2.5,2.4 L4.5,0.6" fill="none" stroke="#777" stroke-width="0.6"/></svg>
<div style="position:absolute;left:221.2px;top:271.4px;width:17px;height:11px;box-sizing:border-box;border:0.6px solid #d6d6d6;border-radius:1.5px;background:linear-gradient(#fcfcfc,#f0f0f0);"></div>
<div style="position:absolute;left:240.4px;top:271.4px;width:17px;height:11px;box-sizing:border-box;border:0.6px solid #d6d6d6;border-radius:1.5px;background:linear-gradient(#fcfcfc,#f0f0f0);"></div>
<svg style="position:absolute;left:0px;top:0px;pointer-events:none" width="750" height="406" viewBox="0 0 750 406"><line x1="139" y1="371.0" x2="750" y2="371.0" stroke="#e6e6e6" stroke-width="0.6"/><line x1="139" y1="351.4666666666667" x2="750" y2="351.4666666666667" stroke="#e6e6e6" stroke-width="0.6"/><line x1="139" y1="331.93333333333334" x2="750" y2="331.93333333333334" stroke="#e6e6e6" stroke-width="0.6"/><line x1="139" y1="312.4" x2="750" y2="312.4" stroke="#e6e6e6" stroke-width="0.6"/><clipPath id="pc"><rect x="139" y="290" width="607.7" height="90"/></clipPath><g clip-path="url(#pc)"><rect x="134.9" y="314.744" width="19.5" height="56.25599999999997" fill="#00fa00"/><rect x="169.496" y="314.744" width="19.5" height="56.25599999999997" fill="#00fa00"/><rect x="205.2452" y="314.744" width="19.5" height="56.25599999999997" fill="#00fa00"/><rect x="240.9944" y="314.744" width="19.5" height="56.25599999999997" fill="#00fa00"/><rect x="273.284" y="314.744" width="19.5" height="56.25599999999997" fill="#00fa00"/><rect x="343.62919999999997" y="314.744" width="19.5" height="56.25599999999997" fill="#00fa00"/><rect x="379.3784" y="314.744" width="19.5" height="56.25599999999997" fill="#00fa00"/><rect x="413.97440000000006" y="314.744" width="19.5" height="56.25599999999997" fill="#00fa00"/><rect x="449.72360000000003" y="314.744" width="19.5" height="56.25599999999997" fill="#00fa00"/><rect x="485.4728" y="314.744" width="19.5" height="56.25599999999997" fill="#00fa00"/><rect x="520.0688" y="314.744" width="19.5" height="56.25599999999997" fill="#00fa00"/><rect x="555.818" y="314.744" width="19.5" height="56.25599999999997" fill="#00fa00"/><rect x="590.414" y="314.744" width="19.5" height="56.25599999999997" fill="#00fa00"/><rect x="626.1632" y="314.744" width="19.5" height="56.25599999999997" fill="#00fa00"/><rect x="661.9123999999999" y="314.744" width="19.5" height="56.25599999999997" fill="#00fa00"/><rect x="695.3552" y="314.744" width="19.5" height="56.25599999999997" fill="#00fa00"/><rect x="731.1043999999999" y="314.744" width="19.5" height="56.25599999999997" fill="#00fa00"/><path d="M144.65,305.21 L179.25,313.34 L215.00,318.57 L250.74,323.49 L283.03,324.90 L318.78,332.25 L353.38,335.14 L389.13,331.31 L423.72,320.14 L459.47,314.43 L495.22,321.70 L529.82,323.73 L565.57,317.95 L600.16,313.34 L635.91,318.57 L671.66,323.49 L705.11,324.90 L740.85,330.68" fill="none" stroke="#f24a4a" stroke-width="1.2" stroke-linejoin="round"/></g></svg>
<div style="position:absolute;right:617px;top:368.1px;font-size:5.6px;line-height:1;white-space:nowrap;color:#666;text-align:right;-webkit-text-stroke-width:0">0</div>
<div style="position:absolute;right:617px;top:348.5666666666667px;font-size:5.6px;line-height:1;white-space:nowrap;color:#666;text-align:right;-webkit-text-stroke-width:0">250</div>
<div style="position:absolute;right:617px;top:329.03333333333336px;font-size:5.6px;line-height:1;white-space:nowrap;color:#666;text-align:right;-webkit-text-stroke-width:0">500</div>
<div style="position:absolute;right:617px;top:309.5px;font-size:5.6px;line-height:1;white-space:nowrap;color:#666;text-align:right;-webkit-text-stroke-width:0">750</div>
<div style="position:absolute;left:94.65px;width:100px;top:376.3px;font-size:5.6px;line-height:1;white-space:nowrap;color:#666;text-align:center;-webkit-text-stroke-width:0">Nov-2014</div>
<div style="position:absolute;left:129.246px;width:100px;top:376.3px;font-size:5.6px;line-height:1;white-space:nowrap;color:#666;text-align:center;-webkit-text-stroke-width:0">Dec-2014</div>
<div style="position:absolute;left:164.9952px;width:100px;top:376.3px;font-size:5.6px;line-height:1;white-space:nowrap;color:#666;text-align:center;-webkit-text-stroke-width:0">Jan-2015</div>
<div style="position:absolute;left:200.7444px;width:100px;top:376.3px;font-size:5.6px;line-height:1;white-space:nowrap;color:#666;text-align:center;-webkit-text-stroke-width:0">Feb-2015</div>
<div style="position:absolute;left:233.034px;width:100px;top:376.3px;font-size:5.6px;line-height:1;white-space:nowrap;color:#666;text-align:center;-webkit-text-stroke-width:0">Mar-2015</div>
<div style="position:absolute;left:268.78319999999997px;width:100px;top:376.3px;font-size:5.6px;line-height:1;white-space:nowrap;color:#666;text-align:center;-webkit-text-stroke-width:0">Apr-2015</div>
<div style="position:absolute;left:303.37919999999997px;width:100px;top:376.3px;font-size:5.6px;line-height:1;white-space:nowrap;color:#666;text-align:center;-webkit-text-stroke-width:0">May-2015</div>
<div style="position:absolute;left:339.1284px;width:100px;top:376.3px;font-size:5.6px;line-height:1;white-space:nowrap;color:#666;text-align:center;-webkit-text-stroke-width:0">Jun-2015</div>
<div style="position:absolute;left:373.72440000000006px;width:100px;top:376.3px;font-size:5.6px;line-height:1;white-space:nowrap;color:#666;text-align:center;-webkit-text-stroke-width:0">Jul-2015</div>
<div style="position:absolute;left:409.47360000000003px;width:100px;top:376.3px;font-size:5.6px;line-height:1;white-space:nowrap;color:#666;text-align:center;-webkit-text-stroke-width:0">Aug-2015</div>
<div style="position:absolute;left:445.2228px;width:100px;top:376.3px;font-size:5.6px;line-height:1;white-space:nowrap;color:#666;text-align:center;-webkit-text-stroke-width:0">Sep-2015</div>
<div style="position:absolute;left:479.8188px;width:100px;top:376.3px;font-size:5.6px;line-height:1;white-space:nowrap;color:#666;text-align:center;-webkit-text-stroke-width:0">Oct-2015</div>
<div style="position:absolute;left:515.568px;width:100px;top:376.3px;font-size:5.6px;line-height:1;white-space:nowrap;color:#666;text-align:center;-webkit-text-stroke-width:0">Nov-2015</div>
<div style="position:absolute;left:550.164px;width:100px;top:376.3px;font-size:5.6px;line-height:1;white-space:nowrap;color:#666;text-align:center;-webkit-text-stroke-width:0">Dec-2015</div>
<div style="position:absolute;left:585.9132px;width:100px;top:376.3px;font-size:5.6px;line-height:1;white-space:nowrap;color:#666;text-align:center;-webkit-text-stroke-width:0">Jan-2016</div>
<div style="position:absolute;left:621.6623999999999px;width:100px;top:376.3px;font-size:5.6px;line-height:1;white-space:nowrap;color:#666;text-align:center;-webkit-text-stroke-width:0">Feb-2016</div>
<div style="position:absolute;left:655.1052px;width:100px;top:376.3px;font-size:5.6px;line-height:1;white-space:nowrap;color:#666;text-align:center;-webkit-text-stroke-width:0">Mar-2016</div>
<div style="position:absolute;left:690.8543999999999px;width:100px;top:376.3px;font-size:5.6px;line-height:1;white-space:nowrap;color:#666;text-align:center;-webkit-text-stroke-width:0">Apr-2016</div>
<div style="position:absolute;left:385px;width:100px;top:287.8px;font-size:8px;line-height:1;white-space:nowrap;color:#4a86e8;text-align:center;">Oven Group 1</div>
<div style="position:absolute;left:386.1px;top:397.0px;width:6.7px;height:5.9px;background:#00fa00"></div>
<div style="position:absolute;left:394.7px;top:398.4px;font-size:5.6px;line-height:1;white-space:nowrap;color:#666;-webkit-text-stroke-width:0">Capacity</div>
<div style="position:absolute;left:424px;top:400px;width:6px;height:0.9px;background:#ee3b3b"></div>
<div style="position:absolute;left:432px;top:398.4px;font-size:5.8px;line-height:1;white-space:nowrap;color:#666;-webkit-text-stroke-width:0">Dependent Demand</div>
<svg style="position:absolute;left:0px;top:0px;pointer-events:none" width="750" height="406" viewBox="0 0 750 406"><path d="M-1.0,-2.9 h2.0 v1.9 h1.9 v2.0 h-1.9 v1.9 h-2.0 v-1.9 h-1.9 v-2.0 h1.9 z" fill="#4fc23a" stroke="#2e8c2a" stroke-width="0.4" stroke-linejoin="round" transform="translate(10.3,49)"/><g transform="translate(29.7,49)" opacity="1"><path d="M-2.9,-1.8 L-1.8,-2.9 L0,-1.1 L1.8,-2.9 L2.9,-1.8 L1.1,0 L2.9,1.8 L1.8,2.9 L0,1.1 L-1.8,2.9 L-2.9,1.8 L-1.1,0 z" fill="#e8472b" stroke="#c03010" stroke-width="0.25" stroke-linejoin="round"/></g><g transform="translate(48.6,49) rotate(38)"><path d="M-3.2,0 Q0,-1.2 1.6,-1.6 A1.7,1.7 0 0 1 1.6,1.6 Q0,1.2 -3.2,0 z" fill="#ec5a22"/><circle cx="1.4" cy="0.2" r="1.1" fill="#f9b52a"/></g><g transform="translate(683,49)"><rect x="-2.7" y="-2.7" width="5.4" height="5.4" fill="#2b5fb8"/><rect x="-1.4" y="-2.7" width="2.8" height="2" fill="#dfe8f6"/><rect x="-1.6" y="0.8" width="3.2" height="1.9" fill="#dfe8f6"/></g><path d="M-1.0,-2.9 h2.0 v1.9 h1.9 v2.0 h-1.9 v1.9 h-2.0 v-1.9 h-1.9 v-2.0 h1.9 z" fill="#4fc23a" stroke="#2e8c2a" stroke-width="0.4" stroke-linejoin="round" transform="translate(699.8,49)"/><g transform="translate(716.5,49)" opacity="1"><path d="M-2.9,-1.8 L-1.8,-2.9 L0,-1.1 L1.8,-2.9 L2.9,-1.8 L1.1,0 L2.9,1.8 L1.8,2.9 L0,1.1 L-1.8,2.9 L-2.9,1.8 L-1.1,0 z" fill="#e8472b" stroke="#c03010" stroke-width="0.25" stroke-linejoin="round"/></g><g transform="translate(735,49)"><circle r="2.6" fill="none" stroke="#e8472b" stroke-width="1.7" stroke-dasharray="3 1.1"/></g><path transform="translate(130,49) scale(1,1)" d="M-2.6,0 L-0.4,-2.2 L-0.4,-1 L2.6,-1 L2.6,1 L-0.4,1 L-0.4,2.2 z" fill="#98c6f0"/><path transform="translate(147,49) scale(-1,1)" d="M-2.6,0 L-0.4,-2.2 L-0.4,-1 L2.6,-1 L2.6,1 L-0.4,1 L-0.4,2.2 z" fill="#98c6f0"/><g transform="translate(166,49)"><path d="M2.6,2.4 C3.2,-1.2 0.4,-3 -1.6,-1.2" fill="none" stroke="#3a8ee0" stroke-width="1.6"/><path d="M-3.2,-2.6 L-0.2,0.2 L-3.2,1.6 z" fill="#3a8ee0"/></g><g transform="translate(182.5,49) rotate(-40)"><rect x="-2.7" y="-1.3" width="5.4" height="2.6" rx="1.3" fill="#9490c8" stroke="#6a66a8" stroke-width="0.35"/></g><g transform="translate(201.5,49)"><rect x="-2.7" y="-2.7" width="5.4" height="5.4" fill="#2b5fb8"/><rect x="-1.4" y="-2.7" width="2.8" height="2" fill="#dfe8f6"/><rect x="-1.6" y="0.8" width="3.2" height="1.9" fill="#dfe8f6"/></g><g transform="translate(219,49)"><rect x="-2.6" y="-2.6" width="5.2" height="5.2" fill="#a9c6ea"/><rect x="-1.5" y="-2.6" width="3" height="1.8" fill="#e8f0fa"/><path d="M-0.6,1.2 L0.6,2.3 L2.8,-0.2" fill="none" stroke="#3cb043" stroke-width="1.1"/></g><path d="M-1.0,-2.9 h2.0 v1.9 h1.9 v2.0 h-1.9 v1.9 h-2.0 v-1.9 h-1.9 v-2.0 h1.9 z" fill="#4fc23a" stroke="#2e8c2a" stroke-width="0.4" stroke-linejoin="round" transform="translate(349.3,64.5)"/><g transform="translate(366.2,64.5) rotate(45)" opacity="0.6"><rect x="-1.1" y="-3.6" width="2.2" height="5.6" fill="#f2b84b"/><rect x="-1.1" y="-3.9" width="2.2" height="1.1" fill="#e8604a"/><path d="M-1.1,2 L0,3.8 L1.1,2 z" fill="#f4dcb0"/></g><g transform="translate(382.3,64.5)" opacity="0.8"><path d="M-2.9,-1.8 L-1.8,-2.9 L0,-1.1 L1.8,-2.9 L2.9,-1.8 L1.1,0 L2.9,1.8 L1.8,2.9 L0,1.1 L-1.8,2.9 L-2.9,1.8 L-1.1,0 z" fill="#f08070" stroke="#c03010" stroke-width="0.25" stroke-linejoin="round"/></g><g transform="translate(401.5,64.5)"><path d="M-1.9,-1.9 L1.9,1.9 M1.9,-1.9 L-1.9,1.9" stroke="#3aa83a" stroke-width="1.3" stroke-linecap="round"/><path d="M-2.2,1 L-0.4,2.6 L-2.4,2.6 z" fill="#1f7a1f"/></g><g transform="translate(229.5,179.8)"><circle r="2.9" fill="#9e9ad8"/><circle r="2.9" fill="none" stroke="#6e6ab0" stroke-width="0.4"/><path d="M-1.8,-1.4 A2.2,2.2 0 0 1 1.6,-1.8" stroke="#e6e4f8" stroke-width="0.8" fill="none"/></g><g transform="translate(246.5,179.8)"><rect x="-2.3" y="-2.5" width="4.6" height="5.4" rx="0.5" fill="#d88c3c"/><rect x="-1.5" y="-1.6" width="3" height="3.6" fill="#f6e6c8"/><rect x="-1" y="-3" width="2" height="1.2" fill="#8a6a4a"/></g><g transform="translate(265.5,179.8)"><path d="M-1.9,-1.9 L1.9,1.9 M1.9,-1.9 L-1.9,1.9" stroke="#3aa83a" stroke-width="1.3" stroke-linecap="round"/><path d="M-2.2,1 L-0.4,2.6 L-2.4,2.6 z" fill="#1f7a1f"/></g><g transform="translate(284.8,179.8) rotate(45)" opacity="1"><rect x="-1.1" y="-3.6" width="2.2" height="5.6" fill="#f2b84b"/><rect x="-1.1" y="-3.9" width="2.2" height="1.1" fill="#e8604a"/><path d="M-1.1,2 L0,3.8 L1.1,2 z" fill="#f4dcb0"/></g><g transform="translate(304,179.8)"><circle r="3" fill="#b5b8e0"/><path d="M-2.6,1 C-1,-0.5 1.5,-1.4 3,-0.6 A3,3 0 0 1 -2.6,1.6 z" fill="#2f7ee0"/></g><g transform="translate(230,277)"><circle r="3" fill="#b5b8e0"/><path d="M-2.6,1 C-1,-0.5 1.5,-1.4 3,-0.6 A3,3 0 0 1 -2.6,1.6 z" fill="#2f7ee0"/></g><g transform="translate(249,277)"><path d="M0.6,0.6 L2.8,2.8" stroke="#ee8a2a" stroke-width="1.3" stroke-linecap="round"/><circle cx="-0.9" cy="-0.9" r="2" fill="#c8e6f8" stroke="#6fb0e0" stroke-width="0.7"/></g></svg>
</div></body></html>
